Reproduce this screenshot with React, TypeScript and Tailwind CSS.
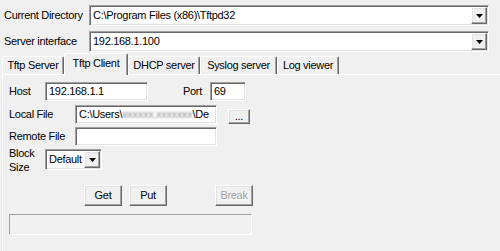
import * as React from 'react'

const SUNKEN =
  'border border-t-[#a0a0a0] border-l-[#a0a0a0] border-b-white border-r-white shadow-[inset_1px_1px_0_#696969,inset_-1px_-1px_0_#e3e3e3]'
const RAISED =
  'border border-t-white border-l-white border-b-[#696969] border-r-[#696969] shadow-[inset_-1px_-1px_0_#a0a0a0,inset_1px_1px_0_#e3e3e3] bg-[#f0f0f0]'

function Arrow() {
  return (
    <svg width="7" height="4" viewBox="0 0 7 4" aria-hidden="true">
      <path d="M0 0h7L3.5 4z" fill="#000" />
    </svg>
  )
}

function DropButton() {
  return (
    <span className={`${RAISED} flex h-full w-[16px] shrink-0 items-center justify-center`}>
      <Arrow />
    </span>
  )
}

function Combo({ value, className }: { value: string; className: string }) {
  return (
    <div className={`${SUNKEN} flex items-stretch bg-white p-[1px] ${className}`}>
      <span className="flex flex-1 items-center pl-[2px]">{value}</span>
      <DropButton />
    </div>
  )
}

function Field({ className, children }: { className: string; children?: React.ReactNode }) {
  return (
    <div className={`${SUNKEN} flex items-center overflow-hidden whitespace-nowrap bg-white pl-[3px] ${className}`}>
      {children}
    </div>
  )
}

const TABS = [
  { label: 'Tftp Server', w: 'w-[62px]' },
  { label: 'Tftp Client', w: 'w-[64px]', active: true },
  { label: 'DHCP server', w: 'w-[72px]' },
  { label: 'Syslog server', w: 'w-[77px]' },
  { label: 'Log viewer', w: 'w-[62px]' },
]

function Button({ label, className, disabled }: { label: string; className: string; disabled?: boolean }) {
  return (
    <div
      className={`${RAISED} flex items-center justify-center ${className} ${
        disabled ? 'text-[#a0a0a0] [text-shadow:1px_1px_0_#fff]' : ''
      }`}
    >
      {label}
    </div>
  )
}

export default function App() {
  return (
    <div className="h-[251px] w-[500px] overflow-hidden bg-[#f0f0f0] font-['Liberation_Sans',Arial,sans-serif] text-[11px] leading-[13px] tracking-[-0.3px] text-black">
      {/* Top fields */}
      <div className="flex items-center pt-[5px]">
        <span className="w-[89px] pl-[4px]">Current Directory</span>
        <Combo value="C:\Program Files (x86)\Tftpd32" className="h-[21px] w-[400px]" />
      </div>
      <div className="mt-[5px] flex items-center">
        <span className="w-[89px] pl-[4px]">Server interface</span>
        <Combo value="192.168.1.100" className="h-[21px] w-[400px]" />
      </div>

      {/* Tabs */}
      <div className="mt-[1px] flex h-[21px] items-end pl-[2px]">
        {TABS.map((t) =>
          t.active ? (
            <div
              key={t.label}
              className={`relative z-10 -mb-[1px] flex h-[22px] ${t.w} items-start justify-center rounded-t-[2px] border-l border-t border-r border-l-white border-t-white border-r-[#696969] bg-[#f0f0f0] pt-[3px] shadow-[inset_-1px_0_0_#a0a0a0]`}
            >
              {t.label}
            </div>
          ) : (
            <div
              key={t.label}
              className={`flex h-[18px] ${t.w} items-center justify-center rounded-t-[2px] border-l border-t border-r border-l-white border-t-white border-r-[#696969] shadow-[inset_-1px_0_0_#a0a0a0]`}
            >
              {t.label}
            </div>
          ),
        )}
      </div>

      {/* Panel */}
      <div className="ml-[2px] h-[200px] border-l border-t border-white pl-[6px]">
        <div className="mt-[7px] flex h-[19px] items-center">
          <span className="w-[36px]">Host</span>
          <Field className="h-[19px] w-[103px]">192.168.1.1</Field>
          <span className="ml-[35px] w-[27px]">Port</span>
          <Field className="h-[19px] w-[36px]">69</Field>
        </div>
        <div className="mt-[4px] flex h-[19px] items-center">
          <span className="w-[66px]">Local File</span>
          <Field className="h-[19px] w-[142px]">
            C:\Users\
            <span className="text-[#8a8a8a] blur-[1.2px]">xxxxxx.xxxxxxx</span>\De
          </Field>
          <div className="ml-[11px] flex h-[19px] items-end">
            <Button label="..." className="h-[15px] w-[22px] leading-[9px]" />
          </div>
        </div>
        <div className="mt-[3px] flex h-[19px] items-center">
          <span className="w-[66px]">Remote File</span>
          <Field className="h-[19px] w-[142px]" />
        </div>
        <div className="mt-[3px] flex h-[21px] items-center">
          <span className="w-[36px] leading-[14px]">
            Block
            <br />
            Size
          </span>
          <div className={`${SUNKEN} flex h-[21px] w-[57px] items-stretch bg-white p-[1px]`}>
            <span className="flex flex-1 items-center pl-[2px]">Default</span>
            <DropButton />
          </div>
        </div>
        <div className="mt-[15px] flex h-[21px]">
          <Button label="Get" className="ml-[75px] h-[21px] w-[38px]" />
          <Button label="Put" className="ml-[7px] h-[21px] w-[38px]" />
          <Button label="Break" className="ml-[48px] h-[21px] w-[38px]" disabled />
        </div>
        <div className="mt-[8px] h-[21px] w-[243px] border border-b-white border-l-[#a0a0a0] border-r-white border-t-[#a0a0a0]" />
      </div>
    </div>
  )
}
